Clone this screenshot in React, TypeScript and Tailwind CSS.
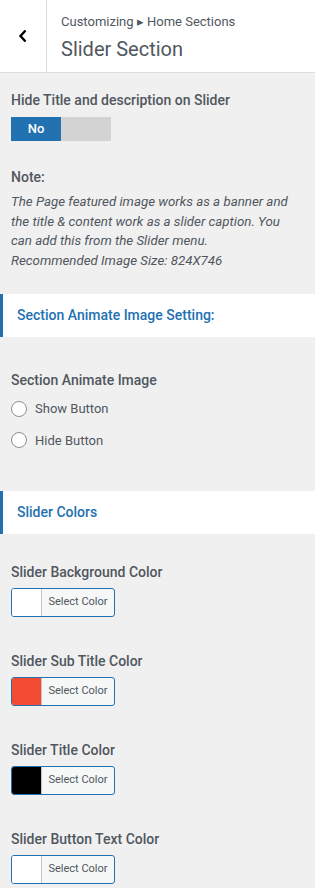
import React from "react";

function ColorControl({ label, color }: { label: string; color: string }) {
  return (
    <div className="flex flex-col">
      <div className="text-[14px] font-medium leading-[20px] text-[#50575e]">{label}</div>
      <div className="mt-[6px] flex h-[29px] w-[104px] overflow-hidden rounded-[3px] border border-[#2271b1] bg-[#f6f7f7]">
        <div className="h-full w-[30px] border-r border-[#c3c4c7]" style={{ backgroundColor: color }} />
        <div className="flex flex-1 items-center justify-center text-[11px] text-[#50575e]">Select Color</div>
      </div>
    </div>
  );
}

function SectionHeading({ text }: { text: string }) {
  return (
    <div className="flex h-[43px] items-center border-l-[3px] border-[#2271b1] bg-white pl-[14px] text-[14px] font-medium text-[#2271b1]">
      {text}
    </div>
  );
}

function Radio({ label }: { label: string }) {
  return (
    <div className="flex items-center gap-[8px]">
      <div className="h-[16px] w-[16px] rounded-full border border-[#8c8f94] bg-white" />
      <span className="text-[13px] text-[#50575e]">{label}</span>
    </div>
  );
}

export default function App() {
  return (
    <div className="min-h-[888px] w-[315px] bg-[#f0f0f1]" style={{ fontFamily: "Roboto, 'Liberation Sans', sans-serif" }}>
      <div className="flex h-[73px] border-b border-[#dcdcde] bg-white">
        <div className="flex w-[47px] items-center justify-center border-r border-[#dcdcde]">
          <svg width="10" height="14" viewBox="0 0 10 14">
            <path d="M7.5 1.5 L2.5 7 L7.5 12.5" fill="none" stroke="#000" strokeWidth="2.4" />
          </svg>
        </div>
        <div className="flex flex-col pl-[14px] pt-[13px]">
          <div className="text-[13px] leading-[18px] text-[#50575e]">Customizing ▸ Home Sections</div>
          <div className="mt-[6px] text-[20px] leading-[24px] text-[#50575e]">Slider Section</div>
        </div>
      </div>

      <div className="px-[11px] pt-[17px]">
        <div className="text-[14px] font-medium leading-[20px] text-[#50575e]">Hide Title and description on Slider</div>
        <div className="mt-[7px] flex h-[24px] w-[100px]">
          <div className="flex w-[50px] items-center justify-center bg-[#2271b1] text-[13px] font-medium text-white">No</div>
          <div className="w-[50px] bg-[#d3d3d3]" />
        </div>
        <div className="mt-[26px] text-[14px] font-medium leading-[20px] text-[#50575e]">Note:</div>
        <div className="mt-[5px] max-w-[281px] text-[13.3px] italic leading-[19.5px] text-[#50575e]">
          The Page featured image works as a banner and the title &amp; content work as a slider caption. You can add this from the Slider menu.
          <br />
          Recommended Image Size: 824X746
        </div>
      </div>

      <div className="mt-[24px]">
        <SectionHeading text="Section Animate Image Setting:" />
      </div>

      <div className="px-[11px] pt-[33px]">
        <div className="text-[14px] font-medium leading-[20px] text-[#50575e]">Section Animate Image</div>
        <div className="mt-[9px] flex flex-col gap-[12px]">
          <Radio label="Show Button" />
          <Radio label="Hide Button" />
        </div>
      </div>

      <div className="mt-[41px]">
        <SectionHeading text="Slider Colors" />
      </div>

      <div className="flex flex-col gap-[34px] px-[11px] pt-[28px] pb-[4px]">
        <ColorControl label="Slider Background Color" color="#ffffff" />
        <ColorControl label="Slider Sub Title Color" color="#f34b32" />
        <ColorControl label="Slider Title Color" color="#000000" />
        <ColorControl label="Slider Button Text Color" color="#ffffff" />
      </div>
    </div>
  );
}
